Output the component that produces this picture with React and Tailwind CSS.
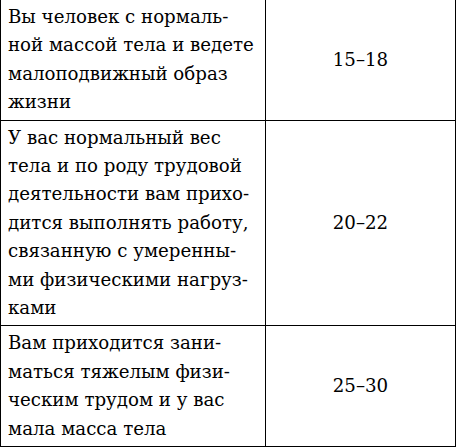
const rows = [
  {
    lines: [
      "Вы человек с нормаль-",
      "ной массой тела и ведете",
      "малоподвижный образ",
      "жизни",
    ],
    value: "15–18",
  },
  {
    lines: [
      "У вас нормальный вес",
      "тела и по роду трудовой",
      "деятельности вам прихо-",
      "дится выполнять работу,",
      "связанную с умеренны-",
      "ми физическими нагруз-",
      "ками",
    ],
    value: "20–22",
  },
  {
    lines: [
      "Вам приходится зани-",
      "маться тяжелым физи-",
      "ческим трудом и у вас",
      "мала масса тела",
    ],
    value: "25–30",
  },
];

export default function App() {
  return (
    <div className="bg-white w-[457px] h-[447px] overflow-hidden">
      <table className="-mt-px w-[456px] border-collapse font-['DejaVu_Serif',serif] text-[18.2px] leading-[28.4px] text-black">
        <tbody>
          {rows.map((r, i) => (
            <tr key={i}>
              <td className="w-[265px] border border-black pl-[7px] pr-1 py-[3px] align-top">
                {r.lines.map((l, j) => (
                  <div key={j} className="whitespace-nowrap">{l}</div>
                ))}
              </td>
              <td className="border border-black text-center align-middle">{r.value}</td>
            </tr>
          ))}
        </tbody>
      </table>
    </div>
  );
}
